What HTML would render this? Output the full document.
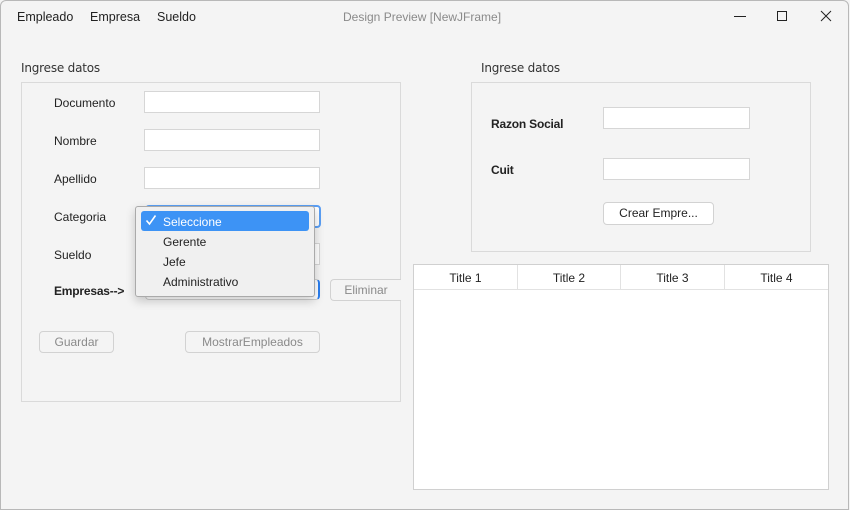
<!DOCTYPE html>
<html><head><meta charset="utf-8"><style>
*{box-sizing:border-box;margin:0;padding:0}
body{width:850px;height:510px;background:#f4f4f4;font-family:"Liberation Sans",sans-serif;font-size:12px;color:#222;position:relative;overflow:hidden}
.a{position:absolute}
.win{left:0;top:0;width:849px;height:510px;border:1px solid #b8b8b8;border-radius:6px 6px 0 0;background:#f4f4f4}
.tf{background:#fff;border:1px solid #d6d6d6}
.grp{border:1px solid #dadada}
.btn{border:1px solid #d2d2d2;border-radius:4px;text-align:center;line-height:20px;background:#f4f4f4;color:#8a8a8a}
.lbl{line-height:14px}
.m{font-size:12.5px}
.b{font-weight:bold;font-size:12px;letter-spacing:-0.2px}
.gl{font-family:"DejaVu Sans",sans-serif;font-size:12px;letter-spacing:-0.2px;color:#333}
</style></head><body>
<div class="a win"></div>
<div class="a lbl m" style="left:17px;top:10px">Empleado</div>
<div class="a lbl m" style="left:90px;top:10px">Empresa</div>
<div class="a lbl m" style="left:157px;top:10px">Sueldo</div>
<div class="a lbl" style="left:343px;top:10px;color:#8a8a8a">Design Preview [NewJFrame]</div>
<svg class="a" style="left:730px;top:8px" width="110" height="18"><path d="M4 8.5H16" stroke="#222"/><path d="M47.5 3.5h9v9h-9z" fill="none" stroke="#222"/><path d="M91 3l10 10M101 3L91 13" stroke="#222"/></svg>

<div class="a gl" style="left:21px;top:61px">Ingrese datos</div>
<div class="a grp" style="left:21px;top:82px;width:380px;height:320px"></div>
<div class="a lbl" style="left:54px;top:96px">Documento</div>
<div class="a lbl" style="left:54px;top:134px">Nombre</div>
<div class="a lbl" style="left:54px;top:172px">Apellido</div>
<div class="a lbl" style="left:54px;top:210px">Categoria</div>
<div class="a lbl" style="left:54px;top:248px">Sueldo</div>
<div class="a lbl b" style="left:54px;top:284px">Empresas--&gt;</div>
<div class="a tf" style="left:144px;top:91px;width:176px;height:22px"></div>
<div class="a tf" style="left:144px;top:129px;width:176px;height:22px"></div>
<div class="a tf" style="left:144px;top:167px;width:176px;height:22px"></div>
<div class="a tf" style="left:144px;top:243px;width:176px;height:22px"></div>
<div class="a" style="left:145px;top:205px;width:176px;height:23px;border:2px solid #5a9ff5;border-radius:4px;background:#fff"></div>
<div class="a" style="left:145px;top:279px;width:175px;height:21px;border:1px solid #d0d0d0;border-right:2px solid #2a7ef0;border-radius:4px;background:#fff"></div>
<div class="a btn" style="left:330px;top:279px;width:71px;height:22px;border-right:none;border-radius:4px 0 0 4px">Eliminar</div>
<div class="a btn" style="left:39px;top:331px;width:75px;height:22px">Guardar</div>
<div class="a btn" style="left:185px;top:331px;width:135px;height:22px">MostrarEmpleados</div>

<div class="a" style="left:135px;top:206px;width:180px;height:91px;background:#f0f0f0;border:1px solid #aaa;border-radius:3px;box-shadow:0 4px 10px rgba(0,0,0,.2)"></div>
<div class="a" style="left:141px;top:211px;width:168px;height:20px;background:#3d93f5;border-radius:3px"></div>
<svg class="a" style="left:145px;top:214px" width="12" height="12"><path d="M1.5 6.5l3 3.5 6-8.5" fill="none" stroke="#fff" stroke-width="1.6"/></svg>
<div class="a lbl" style="left:163px;top:215px;color:#fff">Seleccione</div>
<div class="a lbl" style="left:163px;top:235px">Gerente</div>
<div class="a lbl" style="left:163px;top:255px">Jefe</div>
<div class="a lbl" style="left:163px;top:275px">Administrativo</div>

<div class="a gl" style="left:481px;top:61px">Ingrese datos</div>
<div class="a grp" style="left:471px;top:82px;width:340px;height:170px"></div>
<div class="a lbl b" style="left:491px;top:117px">Razon Social</div>
<div class="a lbl b" style="left:491px;top:163px">Cuit</div>
<div class="a tf" style="left:603px;top:107px;width:147px;height:22px"></div>
<div class="a tf" style="left:603px;top:158px;width:147px;height:22px"></div>
<div class="a btn" style="left:603px;top:202px;width:111px;height:23px;background:#fff;color:#222">Crear Empre...</div>

<div class="a" style="left:413px;top:264px;width:416px;height:226px;background:#fff;border:1px solid #d0d0d0"></div>
<div class="a" style="left:414px;top:289px;width:414px;height:1px;background:#e2e2e2"></div>
<div class="a" style="left:517px;top:265px;width:1px;height:24px;background:#e2e2e2"></div>
<div class="a" style="left:620px;top:265px;width:1px;height:24px;background:#e2e2e2"></div>
<div class="a" style="left:724px;top:265px;width:1px;height:24px;background:#e2e2e2"></div>
<div class="a lbl" style="left:414px;top:271px;width:103px;text-align:center">Title 1</div>
<div class="a lbl" style="left:518px;top:271px;width:102px;text-align:center">Title 2</div>
<div class="a lbl" style="left:621px;top:271px;width:103px;text-align:center">Title 3</div>
<div class="a lbl" style="left:725px;top:271px;width:103px;text-align:center">Title 4</div>
</body></html>
